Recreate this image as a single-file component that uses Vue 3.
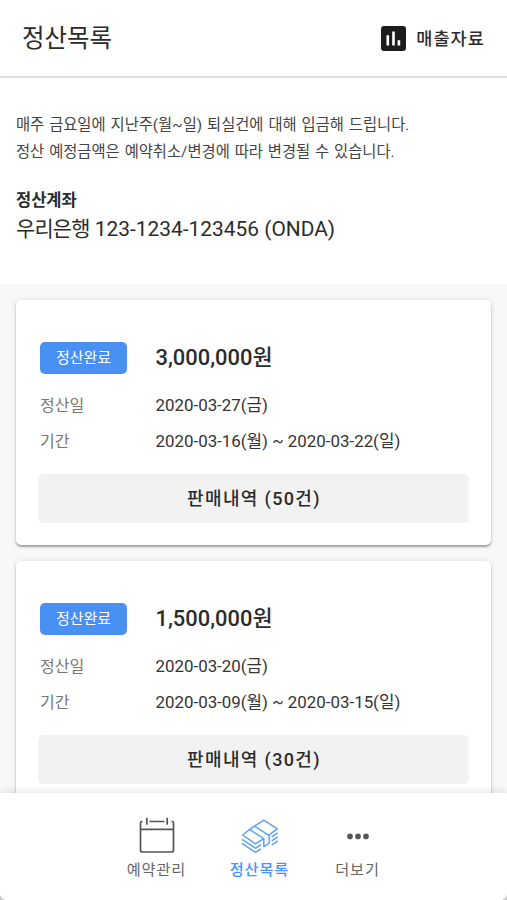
<template>
  <div class="app">
    <header class="header">
      <h1>정산목록</h1>
      <button class="btn-report">
        <svg width="25" height="25" viewBox="0 0 25 25">
          <rect width="25" height="25" rx="3" fill="#1c1c1c" />
          <path d="M6.8 9.2v10.4M12.5 5.6v14M17.9 14.2v5.4" stroke="#fff" stroke-width="2.6" />
        </svg>
        <span>매출자료</span>
      </button>
    </header>

    <section class="info">
      <p class="notice">매주 금요일에 지난주(월~일) 퇴실건에 대해 입금해 드립니다.</p>
      <p class="notice">정산 예정금액은 예약취소/변경에 따라 변경될 수 있습니다.</p>
      <h2>정산계좌</h2>
      <p class="account"><span>우리은행</span> 123-1234-123456 (ONDA)</p>
    </section>

    <main class="list">
      <article v-for="item in settlements" :key="item.date" class="card">
        <div class="row row-top">
          <span class="badge">정산완료</span>
          <strong class="amount">{{ item.amount }}원</strong>
        </div>
        <div class="row">
          <span class="label">정산일</span>
          <span class="value">{{ item.date }}</span>
        </div>
        <div class="row">
          <span class="label">기간</span>
          <span class="value">{{ item.period }}</span>
        </div>
        <button class="btn-detail">판매내역 ({{ item.count }}건)</button>
      </article>
    </main>

    <nav class="tabs">
      <button
        v-for="tab in tabs"
        :key="tab.id"
        class="tab"
        :class="[tab.id, { active: activeTab === tab.id }]"
        @click="activeTab = tab.id"
      >
        <svg v-if="tab.id === 'booking'" width="40" height="40" viewBox="0 0 40 40">
          <path d="M5.5 5.5H4.8Q3.5 5.5 3.5 7V34Q3.5 36 5.5 36H34.5Q36.5 36 36.5 34V7Q36.5 5.5 35.2 5.5H34.5M12.5 5.5H27.5M3.5 13.3H36.5M9.8 1.7V8.7M30.2 1.7V8.7" />
        </svg>
        <svg v-else-if="tab.id === 'settlement'" width="40" height="40" viewBox="0 0 40 40">
          <path d="M14.5 10.2 23.8 4.2 37.3 12.8 29.2 18.8M9.5 13.5 2.6 19 15.5 27.8 23.8 22.5" />
          <path d="M9.5 13.5 14.5 10.2 29.2 19.6V27.2L23.8 30.6V22.7Z" />
          <path d="M1.9 23.3 15.5 32.1 21 28.5M1.9 27.4 15.5 36.4 21 32.8M37.7 16.8 31.8 20.8M37.7 20.8 31.8 24.8M37.7 24.8 31.8 28.8" />
        </svg>
        <svg v-else class="dots" width="40" height="40" viewBox="0 0 40 40">
          <circle cx="12" cy="20.4" r="2.8" />
          <circle cx="20" cy="20.4" r="2.8" />
          <circle cx="28" cy="20.4" r="2.8" />
        </svg>
        <span>{{ tab.name }}</span>
      </button>
    </nav>
  </div>
</template>

<script setup>
import { ref } from 'vue';

const activeTab = ref('settlement');

const tabs = [
  { id: 'booking', name: '예약관리' },
  { id: 'settlement', name: '정산목록' },
  { id: 'more', name: '더보기' }
];

const settlements = [
  { amount: '3,000,000', date: '2020-03-27(금)', period: '2020-03-16(월) ~ 2020-03-22(일)', count: 50 },
  { amount: '1,500,000', date: '2020-03-20(금)', period: '2020-03-09(월) ~ 2020-03-15(일)', count: 30 }
];
</script>

<style>
body { background: #c8c8c8; overflow: hidden; }
</style>

<style scoped>
* { box-sizing: border-box; }

.app {
  height: 100vh; display: flex; flex-direction: column; overflow: hidden;
  background: #fff; color: #2b2b2b; border-radius: 0 0 7px 7px;
  font-family: Roboto, "Noto Sans CJK KR", sans-serif;
}
h1, h2, p { margin: 0; font-weight: 400; white-space: nowrap; }
button { font-family: inherit; color: inherit; background: none; border: none; padding: 0; cursor: pointer; }

.header {
  height: 78px; flex: none; display: flex; justify-content: space-between; align-items: center;
  padding: 2px 22px 0 22px; border-bottom: 2px solid #dedede;
}
h1 { font-size: 24.5px; line-height: 36px; padding-bottom: 1px; }
.btn-report { display: flex; align-items: center; gap: 10px; font-size: 17.5px; font-weight: 500; letter-spacing: 1.1px; }
.btn-report svg { margin-top: -1px; }
.btn-report span { margin-top: -3px; }

.info { height: 206px; flex: none; padding: 34px 16px 0; }
.notice { font-size: 15.35px; line-height: 27px; word-spacing: 1.1px; color: #444; }
h2 { margin-top: 22px; font-size: 16.5px; line-height: 26px; font-weight: 700; }
.account { font-size: 20.9px; line-height: 31px; }
.account span { letter-spacing: -0.8px; }

.list { flex: 1; min-height: 0; overflow: hidden; padding: 16px 16px 0; background: #f8f8f8; }
.card {
  height: 245px; margin-bottom: 16px; padding: 42px 22px 0; background: #fff; border-radius: 5px;
  box-shadow: 0 2px 2px rgba(0, 0, 0, 0.32), 0 0 6px rgba(0, 0, 0, 0.1);
}
.row { height: 36px; display: flex; align-items: center; padding-left: 2px; }
.row-top { height: 32px; margin-bottom: 12px; }
.badge {
  width: 87px; height: 32px; margin-right: 28.5px; border-radius: 5px; background: #4990f5; color: #fff;
  font-size: 15px; line-height: 32px; text-align: center;
}
.amount { margin-top: -6px; font-size: 21.9px; font-weight: 500; }
.label { width: 115.5px; margin-top: -1px; color: #777; font-size: 16px; }
.value { margin-top: -2px; font-size: 16.9px; color: #333; }
.btn-detail {
  display: block; width: 100%; height: 49px; margin-top: 16px; padding-bottom: 3px; padding-left: 1px; border-radius: 5px;
  background: #f2f2f2; font-size: 18px; font-weight: 500; letter-spacing: 1.35px;
}

.tabs {
  height: 107px; flex: none; display: flex; padding-left: 105px; background: #fff;
  position: relative; box-shadow: 0 0 9px rgba(0, 0, 0, 0.14);
}
.tab {
  width: 103px; display: flex; flex-direction: column; align-items: center; padding-top: 23px;
  font-size: 15.2px; line-height: 22px; letter-spacing: 0.9px; color: #666;
}
.tab span { margin-top: 3px; }
.tab svg { flex: none; fill: none; stroke: #555; stroke-width: 1.7; stroke-linejoin: round; }
.tab.more { width: 93px; }
.tab .dots { fill: #555; stroke: none; }
.tab.active { color: #4594f5; font-weight: 500; }
.tab.active svg { stroke: #5ea3f6; stroke-width: 1.5; }
</style>
